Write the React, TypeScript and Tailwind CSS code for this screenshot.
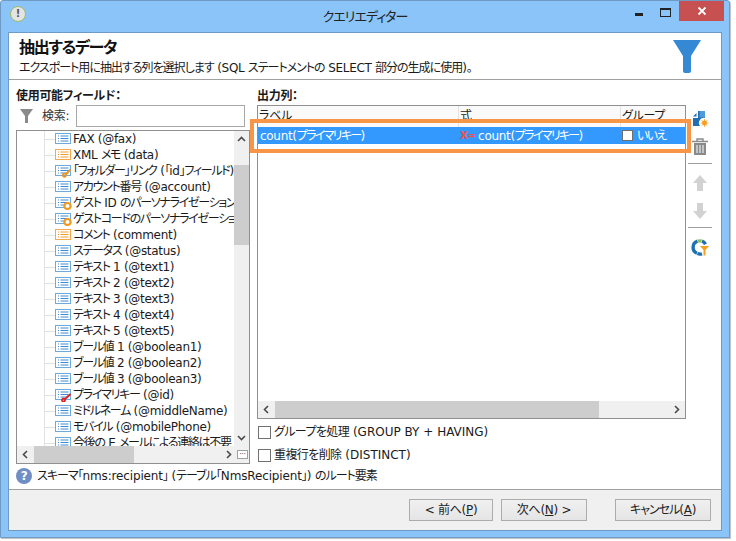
import React from 'react'

const font = { fontFamily: '"DejaVu Sans", "Noto Sans CJK JP", sans-serif' }

type Badge = 'none' | 'key' | 'gear' | 'redkey'

type Field = {
  label: string
  tone?: 'blue' | 'orange'
  badge?: Badge
}

const fields: Field[] = [
  { label: 'FAX (@fax)' },
  { label: 'XML メモ (data)', tone: 'orange' },
  { label: '「フォルダー」リンク (「id」フィールド)', badge: 'key' },
  { label: 'アカウント番号 (@account)' },
  { label: 'ゲスト ID のパーソナライゼーション', badge: 'gear' },
  { label: 'ゲストコードのパーソナライゼーション', badge: 'gear' },
  { label: 'コメント (comment)', tone: 'orange' },
  { label: 'ステータス (@status)' },
  { label: 'テキスト 1 (@text1)' },
  { label: 'テキスト 2 (@text2)' },
  { label: 'テキスト 3 (@text3)' },
  { label: 'テキスト 4 (@text4)' },
  { label: 'テキスト 5 (@text5)' },
  { label: 'ブール値 1 (@boolean1)' },
  { label: 'ブール値 2 (@boolean2)' },
  { label: 'ブール値 3 (@boolean3)' },
  { label: 'プライマリキー (@id)', badge: 'redkey' },
  { label: 'ミドルネーム (@middleName)' },
  { label: 'モバイル (@mobilePhone)' },
  { label: '今後の E メールによる連絡は不要' },
]

// the reference's UI font has narrower kana than Noto, so tighten the CJK runs only
function T({ children, tight = 'tracking-[-1px]' }: { children: string; tight?: string }) {
  const parts = children.split(/([\u3000-\u30ff\u4e00-\u9fff\uff00-\uffef]+)/)
  return (
    <>
      {parts.map((p, i) =>
        i % 2 === 1 ? (
          <span key={i} className={tight}>
            {p}
          </span>
        ) : (
          p
        ),
      )}
    </>
  )
}

function FieldIcon({ tone = 'blue', badge = 'none' }: { tone?: 'blue' | 'orange'; badge?: Badge }) {
  const stroke = tone === 'orange' ? '#f5a94e' : '#6fa8dc'
  const ink = tone === 'orange' ? '#f09a30' : '#3f8ad0'
  return (
    <svg width="17" height="14" viewBox="0 0 17 14" className="shrink-0">
      <rect x="0.5" y="1.5" width="15" height="10" fill="#fff" stroke={stroke} />
      <path d="M3 4h1M3 6.5h1M3 9h1" stroke={ink} />
      <path d="M5.5 4h8M5.5 6.5h8M5.5 9h8" stroke={ink} />
      {badge === 'key' && <path d="M15.5 5.5l-5 5M10.5 10a1.6 1.6 0 1 0 .1.1" stroke="#e8961e" strokeWidth="1.8" fill="none" />}
      {badge === 'redkey' && <path d="M15.5 6l-5.5 5M9.5 11a1.5 1.5 0 1 0 .1.1" stroke="#e02020" strokeWidth="1.8" fill="none" />}
      {badge === 'gear' && (
        <g>
          <circle cx="12.5" cy="10" r="3" fill="#fff" stroke="#f09a1e" strokeWidth="2" />
          <path d="M12.5 6v1.2M12.5 12.8V14M8.5 10h1.2M15.3 10h1.2" stroke="#f09a1e" strokeWidth="1.4" />
        </g>
      )}
    </svg>
  )
}

function ScrollChevron({ dir }: { dir: 'up' | 'down' | 'left' | 'right' }) {
  const d = {
    up: 'M1 6l3.5-3.5L8 6',
    down: 'M1 3l3.5 3.5L8 3',
    left: 'M6 1L2.5 4.5 6 8',
    right: 'M3 1l3.5 3.5L3 8',
  }[dir]
  return (
    <svg width="9" height="9" viewBox="0 0 9 9">
      <path d={d} fill="none" stroke="#4a4a4a" strokeWidth="1.6" />
    </svg>
  )
}

function DialogButton({ children, className }: { children: React.ReactNode; className: string }) {
  return (
    <button className={`flex h-[22px] items-center justify-center border border-[#acacac] bg-gradient-to-b from-[#f0f0f0] to-[#e5e5e5] text-[12px] text-[#222] ${className}`}>
      {children}
    </button>
  )
}

function Check() {
  return <span className="h-[13px] w-[13px] shrink-0 border border-[#707070] bg-white" />
}

function ToolDivider() {
  return <div className="h-px w-[24px] bg-[#a0a0a0]" />
}

export default function App() {
  return (
    <div className="h-[541px] w-[736px] bg-white text-[12px] leading-4 tracking-[-0.3px] text-[#1a1a1a] [font-feature-settings:'palt']" style={font}>
      <div className="flex h-[538px] w-[730px] flex-col rounded-t-[3px] border border-[#6e9ac4] bg-[#8ac4f9] shadow-[1px_1px_1px_rgba(0,0,0,0.25)]">
        {/* title bar */}
        <div className="flex h-[31px] shrink-0 items-start">
          <div className="w-[94px] shrink-0 pl-[9px] pt-[5px]">
            <div className="flex h-[16px] w-[16px] items-center justify-center rounded-full border border-[#9dbb62] bg-[#e4e4e4] text-[10px] font-bold leading-none text-[#555]">
              !
            </div>
          </div>
          <div className="flex h-[30px] flex-1 items-center justify-center pt-[1px] text-[13px] tracking-[-1px] text-[#222]">
            クエリエディター
          </div>
          <div className="flex w-[94px] shrink-0 items-start pr-[5px]">
            <div className="mt-[12px] h-[3px] w-[8px] bg-[#222]" />
            <div className="ml-[17px] mt-[7px] h-[9px] w-[11px] border border-t-2 border-[#222]" />
            <div className="ml-[8px] flex h-[20px] w-[45px] items-center justify-center bg-[#c75050]">
              <svg width="10" height="10" viewBox="0 0 10 10">
                <path d="M1.5 1.5l7 7M8.5 1.5l-7 7" stroke="#fff" strokeWidth="1.8" />
              </svg>
            </div>
          </div>
        </div>

        {/* dialog */}
        <div className="mx-[7px] mb-[6px] flex min-h-0 flex-1 flex-col border border-[#6e9ac4] bg-white">
          <div className="flex h-[47px] shrink-0 items-start justify-between border-b border-[#a0a0a0] pl-[10px] pr-[20px]">
            <div className="pt-[6px]">
              <div className="text-[16px] font-bold leading-[18px] tracking-[-1.3px] text-[#111]">抽出するデータ</div>
              <div className="mt-[3px] text-[12px] leading-4">
                <T>エクスポート用に抽出する列を選択します (SQL ステートメントの SELECT 部分の生成に使用)。</T>
              </div>
            </div>
            <svg width="28" height="33" viewBox="0 0 28 33" className="mt-[7px]">
              <path d="M0 0h28L18 16v15q0 2-2 2h-4q-2 0-2-2V16z" fill="#3588d4" />
            </svg>
          </div>

          <div className="flex min-h-0 flex-1 pl-[7px]">
            {/* left column */}
            <div className="flex w-[234px] shrink-0 flex-col pt-[8px]">
              <div className="h-[16px] font-bold">使用可能フィールド：</div>
              <div className="mt-[1px] flex h-[22px] items-center">
                <svg width="13" height="14" viewBox="0 0 13 14" className="ml-[4px]">
                  <path d="M0 0h13L8 7v7H5V7z" fill="#8a8a8a" />
                </svg>
                <span className="ml-[9px] text-[#333]">検索:</span>
                <div className="ml-[7px] h-[22px] w-[169px] border border-[#a8a8a8] bg-white" />
              </div>
              <div className="mt-[3px] flex h-[334px] flex-col border border-[#909090]">
                <div className="flex min-h-0 flex-1">
                  <div className="relative min-w-0 flex-1 overflow-hidden">
                    <div className="absolute bottom-0 left-[27px] top-0 w-px bg-[#e2e2e2]" />
                    {fields.map((f) => (
                      <div key={f.label} className="flex h-[16px] items-center whitespace-nowrap pl-[27px]">
                        <div className="h-px w-[11px] shrink-0 bg-[#e2e2e2]" />
                        <FieldIcon tone={f.tone} badge={f.badge} />
                        <span className="ml-[1px]">
                          <T tight="tracking-[-1.3px]">{f.label}</T>
                        </span>
                      </div>
                    ))}
                  </div>
                  <div className="flex w-[15px] shrink-0 flex-col items-center bg-[#f0f0f0]">
                    <div className="flex h-[17px] items-center">
                      <ScrollChevron dir="up" />
                    </div>
                    <div className="mt-[17px] h-[80px] w-full bg-[#cdcdcd]" />
                    <div className="mt-auto flex h-[17px] items-center">
                      <ScrollChevron dir="down" />
                    </div>
                  </div>
                </div>
                <div className="flex h-[17px] shrink-0 items-center bg-[#f0f0f0]">
                  <div className="flex w-[17px] justify-center">
                    <ScrollChevron dir="left" />
                  </div>
                  <div className="h-full w-[100px] bg-[#cdcdcd]" />
                  <div className="flex-1" />
                  <div className="flex w-[17px] justify-center">
                    <ScrollChevron dir="right" />
                  </div>
                  <div className="mr-[1px] flex h-[9px] w-[11px] items-center justify-center border border-[#a0a0a0] bg-white text-[8px] leading-none text-[#555]">
                    ···
                  </div>
                </div>
              </div>
              <div className="mt-[3px] flex h-[18px] w-[460px] items-center">
                <div className="flex h-[16px] w-[16px] items-center justify-center rounded-full bg-[#6f8fc4] text-[12px] font-bold leading-none text-white">
                  ?
                </div>
                <span className="ml-[5px] whitespace-nowrap tracking-[-0.15px]">
                  <T>スキーマ「nms:recipient」 (テーブル「NmsRecipient」) のルート要素</T>
                </span>
              </div>
            </div>

            {/* right column */}
            <div className="ml-[7px] flex w-[429px] shrink-0 flex-col pt-[8px]">
              <div className="h-[16px] font-bold">出力列：</div>
              <div className="relative mt-[1px] flex h-[314px] flex-col border border-[#909090]">
                <div className="flex h-[21px] shrink-0 bg-[#fafafa] leading-[20px]">
                  <div className="w-[200px] pl-[1px]">ラベル</div>
                  <div className="w-[162px] border-l border-[#e4e4e4] pl-[1px]">式</div>
                  <div className="border-l border-[#e4e4e4] pl-[1px]">グループ</div>
                </div>
                <div className="flex h-[17px] shrink-0 items-center bg-[#3399ff] text-white">
                  <div className="w-[200px] pl-[2px]">
                    <T tight="tracking-[-1.7px]">count(プライマリキー)</T>
                  </div>
                  <div className="flex w-[162px] items-center pl-[2px]">
                    <span className="text-[10px] font-bold tracking-[-0.5px] text-[#f0504a]">X=</span>
                    <span className="ml-[3px]">
                      <T tight="tracking-[-1.7px]">count(プライマリキー)</T>
                    </span>
                  </div>
                  <div className="flex items-center pl-[2px]">
                    <span className="h-[11px] w-[11px] border border-[#707070] bg-white" />
                    <span className="ml-[4px]">
                      <T tight="tracking-[-1.7px]">いいえ</T>
                    </span>
                  </div>
                </div>
                <div className="flex-1" />
                <div className="flex h-[17px] shrink-0 items-center bg-[#f0f0f0]">
                  <div className="flex w-[17px] justify-center">
                    <ScrollChevron dir="left" />
                  </div>
                  <div className="h-full w-[324px] bg-[#cdcdcd]" />
                  <div className="flex-1" />
                  <div className="flex w-[17px] justify-center">
                    <ScrollChevron dir="right" />
                  </div>
                </div>
                {/* annotation drawn over the grid */}
                <div className="absolute left-[-8px] top-[13px] h-[34px] w-[441px] border-[4px] border-[#f79646]" />
              </div>
              <div className="mt-[5px] flex h-[16px] items-center pl-[1px]">
                <Check />
                <span className="ml-[3px] tracking-normal">
                  <T tight="tracking-[-0.6px]">グループを処理 (GROUP BY + HAVING)</T>
                </span>
              </div>
              <div className="mt-[7px] flex h-[16px] items-center pl-[1px]">
                <Check />
                <span className="ml-[3px] tracking-normal">
                  <T tight="tracking-[-0.6px]">重複行を削除 (DISTINCT)</T>
                </span>
              </div>
            </div>

            {/* toolbar */}
            <div className="ml-[2px] flex w-[24px] shrink-0 flex-col items-center pt-[30px]">
              <svg width="18" height="18" viewBox="0 0 18 18">
                <path d="M7 1h7v7a5 5 0 0 0-5 8H2V8h5z" fill="#1f6fb5" />
                <path d="M2 6.5L5.5 3v3.5z" fill="#1f6fb5" />
                <path d="M8.5 1H14v6.5H8.5z" fill="#4f9bd9" />
                <circle cx="13.5" cy="13" r="2.4" fill="#f5a020" />
                <path d="M13.5 9.2v7.6M9.7 13h7.6M10.8 10.3l5.4 5.4M16.2 10.3l-5.4 5.4" stroke="#f5a020" strokeWidth="0.9" />
              </svg>
              <svg width="16" height="17" viewBox="0 0 16 17" className="mt-[10px]">
                <path d="M0 3.5h16M5 3V1h6v2" fill="none" stroke="#8a8a8a" strokeWidth="1.4" />
                <path d="M2 5h12v12H2z" fill="#8a8a8a" />
                <path d="M5 7v8M8 7v8M11 7v8" stroke="#fff" />
              </svg>
              <div className="mt-[8px]">
                <ToolDivider />
              </div>
              <svg width="16" height="16" viewBox="0 0 16 16" className="mt-[11px]">
                <path d="M8 0l7 8h-4v8H5V8H1z" fill="#d2d2d2" />
              </svg>
              <svg width="16" height="16" viewBox="0 0 16 16" className="mt-[12px]">
                <path d="M8 16l7-8h-4V0H5v8H1z" fill="#d2d2d2" />
              </svg>
              <div className="mt-[8px]">
                <ToolDivider />
              </div>
              <svg width="18" height="17" viewBox="0 0 18 17" className="mt-[11px]">
                <path d="M6.5 2.2A6.5 6.5 0 0 0 6 14.3" fill="none" stroke="#1f6fb5" strokeWidth="3.4" />
                <path d="M7 2.1a6.5 6.5 0 0 1 3.5 0" fill="none" stroke="#8cc152" strokeWidth="3.4" />
                <path d="M11 2.2a6.5 6.5 0 0 1 3.5 3" fill="none" stroke="#1f6fb5" strokeWidth="3.4" />
                <path d="M6.5 14.5a6.5 6.5 0 0 0 4.5.3" fill="none" stroke="#1f6fb5" strokeWidth="3.4" />
                <path d="M9 7h9l-3.5 4v5.5h-2V11z" fill="#f5a020" />
              </svg>
            </div>
          </div>

          {/* footer */}
          <div className="flex h-[41px] shrink-0 items-center border-t border-[#a0a0a0] bg-[#f0f0f0] pb-[1px] pl-[400px]">
            <DialogButton className="w-[84px]">
              &lt; 前へ(<span className="underline">P</span>)
            </DialogButton>
            <DialogButton className="ml-[8px] w-[86px]">
              次へ(<span className="underline">N</span>) &gt;
            </DialogButton>
            <DialogButton className="ml-[28px] w-[96px]">
              <T>キャンセル</T>(<span className="underline">A</span>)
            </DialogButton>
          </div>
        </div>
      </div>
    </div>
  )
}
